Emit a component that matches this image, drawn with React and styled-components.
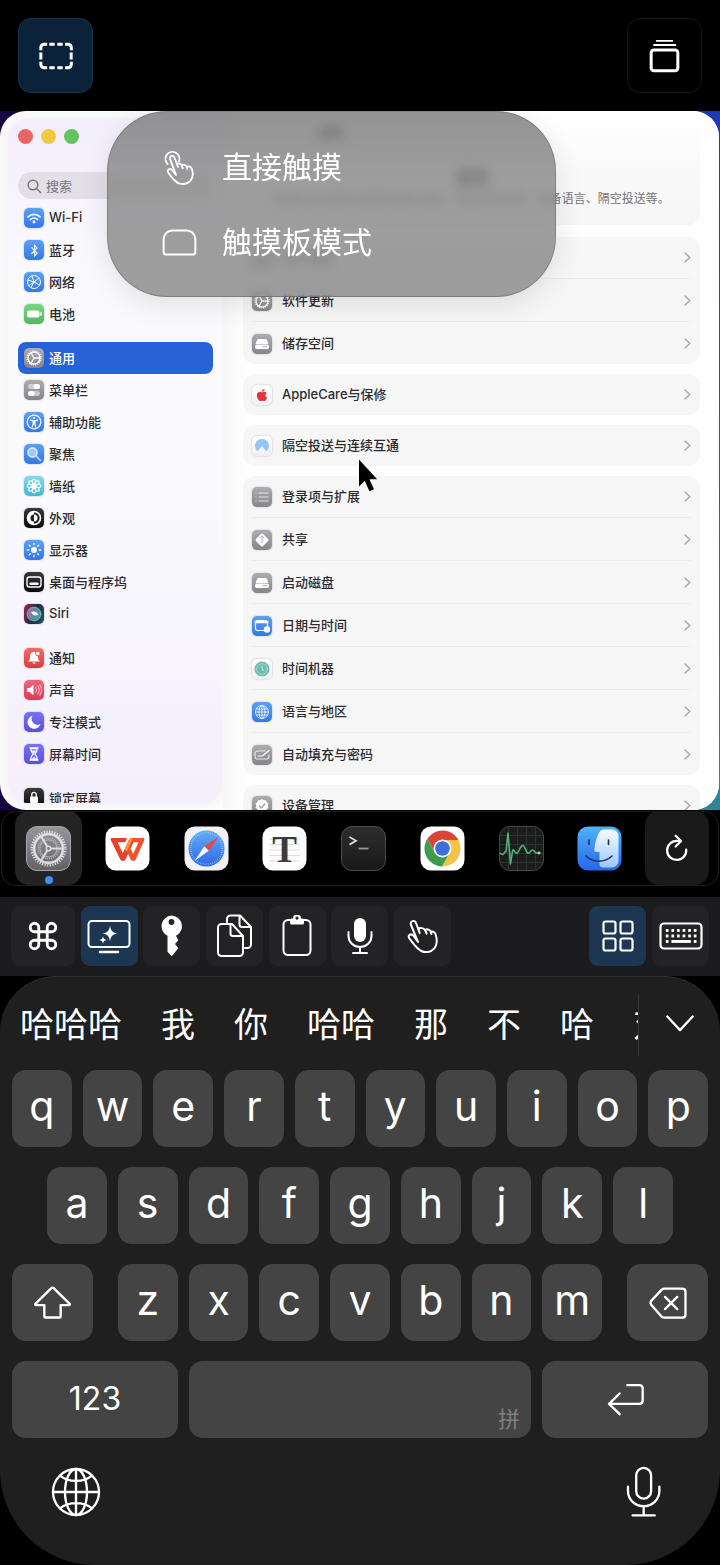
import React from "react";
import styled, { createGlobalStyle, css } from "styled-components";
import { FaApple, FaBluetoothB } from "react-icons/fa";

const Global = createGlobalStyle`
  *, *::before, *::after { box-sizing: border-box; }
  body {
    margin: 0;
    background: #000;
    font-family: Inter, "Noto Sans CJK SC", sans-serif;
  }
  button, input { font: inherit; color: inherit; border: 0; padding: 0; margin: 0; background: none; }
  h1, p, ul { margin: 0; padding: 0; }
  li { list-style: none; }
  svg { display: block; flex: none; }
`;

/* ---------- Shell ---------- */

const Screen = styled.main`
  display: flex;
  flex-direction: column;
  height: 100vh;
  min-height: 1240px;
  overflow: hidden;
  background: #000;
  color: #fff;
`;

const TopBar = styled.header`
  display: flex;
  justify-content: space-between;
  padding: 18px;
`;

const TopButton = styled.button`
  display: grid;
  place-items: center;
  width: 75px;
  height: 75px;
  border: 1px solid ${(p) => (p.$active ? "#1b3247" : "#171717")};
  border-radius: 13px;
  background: ${(p) => (p.$active ? "#0a223a" : "#000")};
`;

/* ---------- Remote desktop ---------- */

const Desktop = styled.section`
  position: relative;
  flex: 1 1 0;
  min-height: 0;
  display: flex;
  padding-right: 1px;
  background:
    linear-gradient(90deg, #16063f 50%, transparent 50%),
    linear-gradient(180deg, #1e37b6 0%, #2b55b4 50%, #2f8594 100%);
`;

const Window = styled.div`
  flex: 1;
  min-width: 0;
  display: flex;
  overflow: hidden;
  border-radius: 26px;
  background: #fefefe;
  color: #2b2b2d;
`;

const Sidebar = styled.aside`
  flex: none;
  width: 215px;
  margin: 7px 0 7px 8px;
  padding: 11px 10px 0;
  overflow: hidden;
  border-radius: 20px;
  background: linear-gradient(180deg, #f3edfc 0%, #fafafd 22%, #fafafc 55%, #f6f2fd 88%, #f5eefc 100%);
  box-shadow: 0 0 12px 4px rgba(0, 0, 0, 0.05);
`;

const Lights = styled.div`
  display: flex;
  gap: 8px;
  margin-bottom: 28px;
`;

const Light = styled.button`
  width: 15px;
  height: 15px;
  border-radius: 50%;
  background: ${(p) => p.$color};
`;

const SearchField = styled.label`
  display: flex;
  align-items: center;
  gap: 4px;
  height: 27px;
  margin-bottom: 3px;
  padding-left: 8px;
  border-radius: 14px;
  background: #e2dfe6;
  color: #77767b;
  font-size: 13px;
  input {
    flex: 1;
    min-width: 0;
    outline: 0;
  }
  input::placeholder {
    color: #77767b;
    opacity: 1;
  }
`;

const NavGroup = styled.ul`
  margin-bottom: 12px;
`;

const NavItem = styled.button`
  display: flex;
  align-items: center;
  gap: 5px;
  width: 100%;
  height: 32px;
  padding-left: 6px;
  border-radius: 8px;
  font-size: 13px;
  font-weight: 500;
  ${(p) =>
    p.$selected &&
    css`
      background: #2862d9;
      color: #fff;
    `}
`;

const Label = styled.span`
  flex: 1;
  padding-bottom: 2px;
  text-align: left;
`;

const Tile = styled.span`
  display: grid;
  place-items: center;
  flex: none;
  width: 20px;
  height: 20px;
  border-radius: 5px;
  background: ${(p) => p.$bg};
  color: ${(p) => p.$ink || "#fff"};
  box-shadow: 0 0 2px rgba(0, 0, 0, 0.28);
  overflow: hidden;
`;

const Content = styled.div`
  flex: 1;
  min-width: 0;
  padding: 9px 19px 0 20px;
  background: linear-gradient(90deg, #f7f7f8 0, #fefefe 24px);
`;

const Hero = styled.header`
  margin-bottom: 12px;
  padding-bottom: 17px;
  border-radius: 12px;
  background: linear-gradient(180deg, #fefefe 0%, #f9f9f9 50%, #f6f6f6 100%);
  text-align: center;
`;

const WindowTitle = styled.p`
  padding-left: 76px;
  margin-bottom: 18px;
  font-size: 12px;
  font-weight: 700;
  line-height: 28px;
  text-align: left;
`;

const HeroTitle = styled.h1`
  font-size: 17px;
  line-height: 24px;
`;

const HeroText = styled.p`
  font-size: 12px;
  line-height: 18px;
  color: #747474;
  white-space: nowrap;
`;

const Card = styled.ul`
  margin-bottom: 10px;
  padding: 0 9px;
  border-radius: 12px;
  background: #f6f6f6;
`;

const CardItem = styled.li`
  & + & {
    padding-top: 1px;
    border-top: 1px solid #ececec;
  }
`;

const SettingRow = styled.button`
  display: flex;
  align-items: center;
  gap: 10px;
  width: 100%;
  height: 41px;
  font-size: 13px;
  font-weight: 500;
  > svg {
    color: #a5a5a7;
  }
`;

const Menu = styled.div`
  position: absolute;
  top: 0;
  left: 107px;
  width: 449px;
  padding: 18px 0 16px;
  border: 1px solid rgba(80, 80, 84, 0.35);
  border-radius: 60px;
  background: linear-gradient(180deg, rgba(116, 116, 118, 0.78), rgba(134, 134, 134, 0.8) 35%);
  backdrop-filter: blur(6px);
  box-shadow: 0 8px 28px rgba(0, 0, 0, 0.1);
`;

const MenuItem = styled.button`
  display: grid;
  grid-template-columns: 36px 1fr;
  align-items: center;
  gap: 25px;
  width: 100%;
  height: 75px;
  padding-left: 53px;
  text-align: left;
  svg {
    justify-self: center;
  }
`;

const MenuLabel = styled.span`
  padding-bottom: 6px;
  font-size: 30px;
`;

const Pointer = styled.svg`
  position: absolute;
  top: 344px;
  left: 355px;
`;

/* ---------- Dock ---------- */

const Dock = styled.nav`
  display: flex;
  justify-content: space-between;
  height: 75px;
  margin: 1px 1px 11px;
  padding: 0 10px 0 14px;
  border-radius: 15px;
  box-shadow: inset 0 0 0 1px #1d1d1d;
`;

const DockItem = styled.button`
  position: relative;
  display: grid;
  place-items: center;
  width: ${(p) => (p.$action ? "64px" : "67px")};
  height: 74px;
  border-radius: 14px;
  background: ${(p) => (p.$active ? "#242424" : p.$action ? "#1a1a1a" : "none")};
`;

const RunningDot = styled.span`
  position: absolute;
  bottom: 1px;
  left: 50%;
  width: 8px;
  height: 8px;
  margin-left: -4px;
  border-radius: 50%;
  background: #3f8cf3;
`;

/* ---------- Tool strip ---------- */

const ToolStrip = styled.div`
  display: flex;
  justify-content: space-between;
  padding: 9px 11px 10px;
  background: #1c1c1e;
`;

const ToolGroup = styled.div`
  display: flex;
  justify-content: space-between;
  flex: 0 1 ${(p) => p.$span}px;
`;

const Tool = styled.button`
  display: grid;
  place-items: center;
  width: ${(p) => (p.$wide ? "64px" : "57px")};
  height: 60px;
  border-radius: 9px;
  background: ${(p) => (p.$active ? "#1d3753" : "#232325")};
`;

/* ---------- Keyboard ---------- */

const Keyboard = styled.section`
  padding: 18px 12px 48px;
  border-top: 1px solid #303030;
  border-radius: 56px 56px 95px 95px;
  background: #1f1f1f;
`;

const Candidates = styled.div`
  display: flex;
  height: 61px;
  margin-bottom: 14px;
`;

const CandidateList = styled.div`
  flex: 1;
  min-width: 0;
  display: flex;
  align-items: center;
  gap: 39px;
  padding: 0 0 2px 8px;
  overflow: hidden;
  border-right: 1px solid #363636;
`;

const Candidate = styled.button`
  flex: none;
  font-size: 34px;
  line-height: 48px;
  white-space: nowrap;
`;

const Expand = styled.button`
  display: grid;
  place-items: center;
  width: 69px;
  padding: 0 0 4px 12px;
`;

const KeyRows = styled.div`
  display: grid;
  gap: 20px;
`;

const KeyRow = styled.div`
  display: flex;
  gap: ${(p) => (p.$loose ? "25px" : "11px")};
  padding: 0 ${(p) => (p.$inset ? "35px" : "0")};
`;

const KeyGroup = styled.div`
  flex: 1;
  display: flex;
  gap: 11px;
`;

const Key = styled.button`
  display: grid;
  place-items: center;
  flex: ${(p) => (p.$width ? `0 0 ${p.$width}px` : "1 1 0")};
  min-width: 0;
  height: 77px;
  border-radius: 14px;
  background: #444;
`;

const LetterKey = styled(Key)`
  padding-bottom: 5px;
  font-size: 41px;
  line-height: 52px;
`;

const NumberKey = styled(Key)`
  padding-bottom: 2px;
  font-size: 32px;
`;

const SpaceKey = styled(Key)`
  place-items: end;
  padding: 0 11px 5px;
  color: #7f7f7f;
  font-size: 22px;
`;

const SystemRow = styled.div`
  display: flex;
  align-items: center;
  justify-content: space-between;
  height: 51px;
  margin-top: 28px;
  padding: 0 47px 0 39px;
`;

/* ---------- Line icons ---------- */

const Line = ({ w, h, box, sw = 2, children, ...rest }) => (
  <svg
    width={w}
    height={h}
    viewBox={box}
    fill="none"
    stroke="currentColor"
    strokeWidth={sw}
    strokeLinecap="round"
    strokeLinejoin="round"
    aria-hidden="true"
    {...rest}
  >
    {children}
  </svg>
);

const SelectionIcon = () => (
  <Line w={34} h={28} box="116 127 102 83" sw={9} strokeLinecap="butt">
    <path d="M121.500 151v-8a10 10 0 0 1 10-10h9M147 133h16M171 133h16M194 133h9a10 10 0 0 1 10 10v8M212.500 158v21M121.500 158v21M121.500 186v8a10 10 0 0 0 10 10h9M147 204h16M171 204h16M194 204h9a10 10 0 0 0 10-10v-8" />
  </Line>
);

const WindowsIcon = () => (
  <Line w={31} h={34} box="866 113 93 101" sw={9}>
    <rect x="872.500" y="145.500" width="80" height="62" rx="8" />
    <path d="M889 118h47M881 130.500h64" strokeWidth="5.500" />
  </Line>
);

const TapIcon = () => (
  <Line w={30} h={35} box="492 442 90 105" sw={5.5}>
    <path d="M503 484a21 21 0 1 1 34-8" />
    <path d="M528 517L511 471c-4-12 9-16 13-5l10 27-3-9c5-4 12-1 14 4l3 9-3-9c5-4 13-1 15 5l2 6-2-6c6-4 13-1 16 7 4 12 3 24-4 33-8 9-22 13-35 9-14-5-21-17-32-32-6-8 4-15 11-8z" />
  </Line>
);

const TrackpadIcon = () => (
  <Line w={35} h={27} box="484 688 107 82" sw={6}>
    <path d="M516 692h43a27 27 0 0 1 27 27v38a9 9 0 0 1-9 9h-79a9 9 0 0 1-9-9v-38a27 27 0 0 1 27-27z" />
  </Line>
);

const CommandIcon = () => (
  <Line w={34} h={34} box="0 0 24 24" sw={2}>
    <path d="M15 6v12a3 3 0 1 0 3-3H6a3 3 0 1 0 3 3V6a3 3 0 1 0-3 3h12a3 3 0 1 0-3-3" />
  </Line>
);

const MonitorIcon = () => (
  <Line w={44} h={36} box="0 0 44 36" sw={2}>
    <rect x="1.500" y="3" width="41" height="26" rx="3.500" />
    <path d="M13 34h18" strokeWidth="2.500" />
    <g fill="currentColor" stroke="none">
      <path d="M23 7.500c.8 5.600 2.400 7.200 8 8-5.600.8-7.200 2.400-8 8-.8-5.600-2.400-7.200-8-8 5.600-.8 7.200-2.400 8-8z" />
      <path d="M16 18c.4 2.800 1.200 3.600 4 4-2.800.4-3.600 1.200-4 4-.4-2.800-1.200-3.600-4-4 2.800-.4 3.600-1.200 4-4z" />
    </g>
  </Line>
);

const KeyIcon = () => (
  <svg width="24" height="42" viewBox="0 0 24 42" fill="currentColor" aria-hidden="true">
    <path
      fillRule="evenodd"
      d="M11.500.5a10.700 10.700 0 0 1 4.500 20.300l2.300 4.500-3.300 3.700 3.300 4.300-6.600 8-4.200-4.600V20.800A10.700 10.700 0 0 1 11.500.5zm0 3.600a2.900 2.900 0 1 0 0 5.800 2.900 2.900 0 0 0 0-5.800z"
    />
  </svg>
);

const CopyIcon = () => (
  <Line w={37} h={44} box="0 0 37 44" sw={2}>
    <path d="M11 8V5a3.500 3.500 0 0 1 3.500-3.500H24L35 13v17.500a3.500 3.500 0 0 1-3.500 3.500H29" />
    <path d="M23.500 2v8.500A2.500 2.500 0 0 0 26 13h8.500" />
    <path d="M5.500 10H16l11 12v16.500a3.500 3.500 0 0 1-3.500 3.500h-18A3.500 3.500 0 0 1 2 38.500v-25A3.500 3.500 0 0 1 5.500 10z" />
    <path d="M14.500 10.500v9A2.500 2.500 0 0 0 17 22h9.500" />
  </Line>
);

const ClipboardIcon = () => (
  <Line w={30} h={42} box="0 0 30 42" sw={2}>
    <path d="M8 5H6a4.500 4.500 0 0 0-4.500 4.500v26A4.500 4.500 0 0 0 6 40h18a4.500 4.500 0 0 0 4.500-4.500v-26A4.500 4.500 0 0 0 24 5h-2" />
    <path
      fill="currentColor"
      stroke="none"
      fillRule="evenodd"
      d="M11 3.500a4 4 0 0 1 8 0h1.500A1.500 1.500 0 0 1 22 5v3a1.500 1.500 0 0 1-1.500 1.500h-11A1.500 1.500 0 0 1 8 8V5a1.500 1.500 0 0 1 1.500-1.500zm4-2a1.600 1.600 0 1 0 0 3.200 1.600 1.600 0 0 0 0-3.200z"
    />
  </Line>
);

const MicFilledIcon = () => (
  <Line w={26} h={38} box="0 0 26 38" sw={2}>
    <rect x="7" y="1" width="12" height="24" rx="6" fill="currentColor" stroke="none" />
    <path d="M1.500 15v4a11.500 11 0 0 0 23 0v-4M13 30v6M6 36h14" />
  </Line>
);

const HandIcon = () => (
  <Line w={31} h={35} box="140 358 93 105" sw={6}>
    <path d="M173 427L152 376c-4-12 11-17 15-6l11 30-4-12c5-5 17-3 20 3l5 11-4-11c6-4 14-1 16 5l2 7-2-7c8-1 14 3 16 12 4 14 3 28-5 38-10 12-27 14-39 8-17-9-25-24-36-38-7-9 5-16 12-8z" />
  </Line>
);

const GridIcon = () => (
  <Line w={32} h={32} box="0 0 32 32" sw={2.2}>
    {[1.5, 18.5].map((y) =>
      [1.5, 18.5].map((x) => <rect key={`${x}-${y}`} x={x} y={y} width="12" height="12" rx="2" />)
    )}
  </Line>
);

const KeyboardIcon = () => (
  <Line w={44} h={28} box="0 0 44 28" sw={2.2}>
    <rect x="1.500" y="1.500" width="41" height="25" rx="3.500" />
    <g fill="currentColor" stroke="none">
      {[7, 12.5, 18].map((y) =>
        [6.8, 12.4, 18, 23.6, 29.2, 34.8].map((x, i) =>
          y > 17 && i > 0 && i < 5 ? null : <rect key={`${x}-${y}`} x={x} y={y} width="2.700" height="2.900" />
        )
      )}
      <rect x="12.400" y="18" width="19.500" height="2.900" />
    </g>
  </Line>
);

const RefreshIcon = () => (
  <Line w={24} h={28} box="916 104 70 82" sw={6.5}>
    <path d="M978 150A28 28 0 1 1 950 124H962" />
    <path d="M947 109l16 15.500-16 16" />
  </Line>
);

const ChevronDownIcon = () => (
  <Line w={28} h={17} box="916 134 85 50" sw={7}>
    <path d="M920 138l38.500 41 38.500-41" />
  </Line>
);

const ShiftIcon = () => (
  <Line w={37} h={33} box="101 111 111 98" sw={7}>
    <path d="M153 117q3.500-3 7 0l48 47q2 4-3 4h-24v33q0 4-4 4h-41q-4 0-4-4v-33h-24q-5 0-3-4z" />
  </Line>
);

const DeleteIcon = () => (
  <Line w={38} h={32} box="866 112 114 97" sw={7}>
    <path d="M912 117h54q10 0 10 10v68q0 10-10 10h-54q-5 0-8-3l-32-36q-4-6 0-12l32-34q3-3 8-3zM914 142l37 37M951 142l-37 37" />
  </Line>
);

const ReturnIcon = () => (
  <Line w={37} h={33} box="740 402 111 98" sw={7}>
    <path d="M801 408h36q10 0 10 10v36q0 10-10 10h-90M778 433l-32 31 32 31" />
  </Line>
);

const GlobeIcon = () => (
  <Line w={50} h={50} box="153 654 150 150" sw={7}>
    <circle cx="228" cy="729" r="69" />
    <ellipse cx="228" cy="729" rx="33" ry="69" />
    <path d="M159 729h138M228 660v138M180 680c26 21 70 21 96 0M180 778c26-21 70-21 96 0" />
  </Line>
);

const MicIcon = () => (
  <Line w={35} h={52} box="797 646 106 156" sw={7}>
    <rect x="828" y="651" width="45" height="93" rx="22.500" />
    <path d="M803 708v14a47.500 45 0 0 0 95 0v-14M850.500 767v27M817 795h67" />
  </Line>
);

const SearchIcon = () => (
  <Line w={16} h={16} box="0 0 16 16" sw={1.5}>
    <circle cx="7" cy="7" r="4.800" />
    <path d="M10.500 10.500l4 4" />
  </Line>
);

const ChevronRightIcon = () => (
  <Line w={7} h={11} box="0 0 7 11" sw={1.4}>
    <path d="M1 1l4.800 4.500L1 10" />
  </Line>
);

/* ---------- Settings tile glyphs (20 × 20) ---------- */

const Glyph = ({ children, sw = 1.4 }) => (
  <Line w={20} h={20} box="0 0 20 20" sw={sw}>
    {children}
  </Line>
);

const solid = { fill: "currentColor", stroke: "none" };

const glyphs = {
  wifi: (
    <Glyph sw={1.7}>
      <path d="M4 8.800c3.500-3.300 8.500-3.300 12 0M6.500 11.500c2-2 5-2 7 0" />
      <circle cx="10" cy="14" r="1.400" {...solid} />
    </Glyph>
  ),
  bluetooth: <FaBluetoothB size={13} />,
  network: (
    <Glyph sw={1}>
      <circle cx="10" cy="10" r="6.500" />
      <path d="M4 8l6 2 5-4M10 10l-3 5.500M10 10l5.500 3M8 4l2 6M5 13.500L10 10" />
      <circle cx="10" cy="10" r="1.300" {...solid} />
    </Glyph>
  ),
  battery: (
    <Glyph>
      <rect x="3" y="6.500" width="12.500" height="7" rx="2" {...solid} />
      <path d="M17 8.800v2.400" />
    </Glyph>
  ),
  gear: (
    <Glyph sw={1.3}>
      <circle cx="10" cy="10" r="6" />
      <circle cx="10" cy="10" r="7" strokeWidth="1.200" strokeDasharray="1.100 1.100" strokeLinecap="butt" />
      <path d="M10 10h6M10 10L7 4.800M10 10l-3 5.200" />
    </Glyph>
  ),
  toggles: (
    <Glyph>
      <rect x="4" y="4" width="12" height="5" rx="2.500" fill="currentColor" fillOpacity=".5" stroke="none" />
      <rect x="4" y="11" width="12" height="5" rx="2.500" fill="currentColor" fillOpacity=".5" stroke="none" />
      <rect x="9.500" y="4" width="6.500" height="5" rx="2.500" {...solid} />
      <rect x="4" y="11" width="6.500" height="5" rx="2.500" {...solid} />
    </Glyph>
  ),
  access: (
    <Glyph sw={1.2}>
      <circle cx="10" cy="10" r="6.800" />
      <circle cx="10" cy="6" r="1.100" {...solid} />
      <path d="M6.500 8.200l2.700.7v2.500L8.300 15M13.500 8.200l-2.700.7v2.500l.9 3.600M10 9v3" />
    </Glyph>
  ),
  search: (
    <Glyph sw={1.6}>
      <circle cx="8.500" cy="8.500" r="4.600" fill="currentColor" fillOpacity=".5" strokeOpacity=".7" />
      <path d="M12.500 12.500l4 4" strokeOpacity=".7" />
    </Glyph>
  ),
  flower: (
    <Glyph sw={1.1}>
      {[0, 45, 90, 135, 180, 225, 270, 315].map((a) => (
        <ellipse key={a} cx="10" cy="5.600" rx="1.700" ry="2.300" transform={`rotate(${a} 10 10)`} />
      ))}
      <circle cx="10" cy="10" r="2" {...solid} />
    </Glyph>
  ),
  appearance: (
    <Glyph sw={1.6}>
      <circle cx="10" cy="10" r="6.500" />
      <path d="M10 3.500a6.500 6.500 0 0 0 0 13v-3a3.500 3.500 0 0 1 0-7z" {...solid} />
      <path d="M10 6.500a3.500 3.500 0 0 1 0 7z" {...solid} />
    </Glyph>
  ),
  sun: (
    <Glyph sw={1.3}>
      <circle cx="10" cy="10" r="3" {...solid} />
      <path d="M10 3.300v1.400M10 15.300v1.400M3.300 10h1.400M15.300 10h1.400M5.300 5.300l1 1M13.700 13.700l1 1M14.700 5.300l-1 1M6.300 13.700l-1 1" />
    </Glyph>
  ),
  dock: (
    <Glyph sw={1.4}>
      <rect x="3" y="5" width="14" height="10" rx="2.500" />
      <rect x="5.500" y="10.500" width="9" height="2.500" rx=".8" {...solid} />
    </Glyph>
  ),
  siri: (
    <Glyph sw={1}>
      <circle cx="10" cy="10" r="7" fill="#5fb5c4" fillOpacity=".75" stroke="#b9dfe6" strokeOpacity=".5" />
      <path d="M3.500 9c2-5 7-5 8 .5-1 4-6 3.500-8-.5z" fill="#c0609e" fillOpacity=".75" stroke="none" />
      <path d="M7 8c3-1.500 6 0 7.500 2.500-2.500 1.800-5.500 1.500-7.500-2.500z" {...solid} />
    </Glyph>
  ),
  bell: (
    <Glyph>
      <path d="M10 4c-2.600 0-4 1.900-4 4.400 0 3-.8 3.800-2 5.100h12c-1.200-1.300-2-2.100-2-5.100C14 5.900 12.600 4 10 4zM8.300 14.500a1.800 1.800 0 0 0 3.400 0z" {...solid} />
      <circle cx="14" cy="5.500" r="2.400" fill="currentColor" stroke="#e0504c" strokeWidth="1" />
    </Glyph>
  ),
  speaker: (
    <Glyph sw={1.1}>
      <path d="M3 8h2.500L9.500 4.800v10.400L5.500 12H3z" {...solid} />
      <path d="M11.800 7.500c1 1.500 1 3.500 0 5M13.800 6c1.800 2.400 1.800 5.600 0 8M15.800 4.800c2.400 3 2.400 7.400 0 10.400" strokeOpacity=".65" />
    </Glyph>
  ),
  moon: (
    <Glyph>
      <path d="M8.500 3.800a6.600 6.600 0 1 0 8 8.300A6 6 0 0 1 8.500 3.800z" {...solid} />
    </Glyph>
  ),
  hourglass: (
    <Glyph sw={1.3}>
      <path d="M6 4h8M6 16h8" />
      <path d="M7 4.500h6V6c0 2-1.800 3-2.200 4 .4 1 2.200 2 2.200 4v1.500H7V14c0-2 1.800-3 2.200-4C8.800 9 7 8 7 6z" />
      <path d="M7.500 6.500h5L10 9.500zM8 14.800l2-2.300 2 2.300z" {...solid} />
    </Glyph>
  ),
  lock: (
    <Glyph sw={1.3}>
      <rect x="6" y="8.500" width="8" height="6.500" rx="1.200" {...solid} />
      <path d="M7.800 8.500V6.500a2.200 2.200 0 0 1 4.400 0v2" />
    </Glyph>
  ),
  drive: (
    <Glyph>
      <path d="M6.500 5h7q1 0 1.500 1.200L16.500 10h-13L5 6.200Q5.500 5 6.500 5z" {...solid} />
      <rect x="3" y="10.500" width="14" height="4.500" rx="1.800" {...solid} />
      <path d="M11 12.700h3.500" stroke="#a8a8ac" strokeWidth="1" />
    </Glyph>
  ),
  apple: <FaApple size={14} />,
  airdrop: (
    <Glyph>
      <path d="M10 3a7 7 0 0 1 4.500 12.300L10 10l-4.500 5.300A7 7 0 0 1 10 3z" {...solid} />
      <path d="M7.800 16.200L10 11l2.200 5.200z" fill="#eef6ff" stroke="none" />
    </Glyph>
  ),
  list: (
    <Glyph sw={1.2}>
      <path d="M7 6h9M7 10h9M7 14h9M4 6h.1M4 10h.1M4 14h.1" strokeOpacity=".75" />
    </Glyph>
  ),
  share: (
    <Glyph>
      <rect x="5" y="5" width="10" height="10" rx="1.500" transform="rotate(45 10 10)" {...solid} />
      <path d="M10 6v7M8 8l2-2 2 2" stroke="#b4b4b8" strokeWidth="1" />
    </Glyph>
  ),
  calendar: (
    <Glyph sw={1.2}>
      <rect x="3.500" y="4.500" width="12" height="10" rx="2" />
      <path d="M3.500 6.200h12" strokeWidth="2.200" />
      <circle cx="15" cy="13.500" r="3.200" {...solid} />
    </Glyph>
  ),
  timemachine: (
    <Glyph sw={1}>
      <circle cx="10" cy="10" r="7.500" {...solid} />
      <circle cx="10" cy="10" r="5.300" stroke="#a4d8ce" />
      <path d="M10 7v3.500l2 1" stroke="#c6eae3" />
    </Glyph>
  ),
  globe: (
    <Glyph sw={0.9}>
      <g strokeOpacity=".85">
        <circle cx="10" cy="10" r="6.500" />
        <ellipse cx="10" cy="10" rx="3" ry="6.500" />
        <path d="M3.500 10h13M10 3.500v13M4.500 7h11M4.500 13h11" />
      </g>
    </Glyph>
  ),
  password: (
    <Glyph sw={1.2}>
      <path d="M13 6H5.500A2.500 2.500 0 0 0 3 8.500v3A2.500 2.500 0 0 0 5.500 14h9a2.500 2.500 0 0 0 2.500-2.500V10" strokeOpacity=".75" />
      <path d="M6 11h4M11 10.500l6-5" />
    </Glyph>
  ),
  badge: (
    <Glyph>
      <path d="M10 3l1.800 1.300 2.200-.1.700 2.100 1.800 1.300-.7 2.100.7 2.100-1.800 1.300-.7 2.100-2.200-.1L10 16.500l-1.800-1.400-2.200.1-.7-2.100-1.800-1.300.7-2.100-.7-2.100 1.800-1.300.7-2.100 2.200.1z" {...solid} />
      <path d="M7.500 10l1.800 2 3.400-4" stroke="#a4a4a8" />
    </Glyph>
  ),
};

const BLUE = "linear-gradient(#5ba0f5, #3578e6)";
const GREY = "linear-gradient(#acacb1, #85858a)";
const BLACK = "linear-gradient(#3a3a3a, #0a0a0a)";
const PURPLE = "linear-gradient(#7b73f2, #584fdd)";
const WHITE = "linear-gradient(#fff, #f0f0f2)";

const navGroups = [
  [
    ["Wi-Fi", "wifi", BLUE],
    ["蓝牙", "bluetooth", BLUE],
    ["网络", "network", BLUE],
    ["电池", "battery", "linear-gradient(#7cd582, #52b85c)"],
  ],
  [
    ["通用", "gear", GREY],
    ["菜单栏", "toggles", GREY],
    ["辅助功能", "access", BLUE],
    ["聚焦", "search", BLUE],
    ["墙纸", "flower", "linear-gradient(#86d9ea, #43b6d3)"],
    ["外观", "appearance", BLACK],
    ["显示器", "sun", BLUE],
    ["桌面与程序坞", "dock", BLACK],
    ["Siri", "siri", "linear-gradient(110deg, #a1265f, #23283d 50%, #1b5a6e)"],
  ],
  [
    ["通知", "bell", "linear-gradient(#ee6d66, #d93d3d)"],
    ["声音", "speaker", "linear-gradient(#f0647c, #dc3a5a)"],
    ["专注模式", "moon", PURPLE],
    ["屏幕时间", "hourglass", PURPLE],
  ],
  [["锁定屏幕", "lock", BLACK]],
];

const cards = [
  [
    ["关于本机", "dock", GREY],
    ["软件更新", "gear", GREY],
    ["储存空间", "drive", GREY],
  ],
  [["AppleCare与保修", "apple", WHITE, "#e0353f"]],
  [["隔空投送与连续互通", "airdrop", WHITE, "#94c4f5"]],
  [
    ["登录项与扩展", "list", GREY],
    ["共享", "share", GREY],
    ["启动磁盘", "drive", GREY],
    ["日期与时间", "calendar", BLUE],
    ["时间机器", "timemachine", WHITE, "#6fbcae"],
    ["语言与地区", "globe", BLUE],
    ["自动填充与密码", "password", GREY],
  ],
  [["设备管理", "badge", GREY]],
];

/* ---------- Dock app icons (45 × 45) ---------- */

const AppIcon = ({ children, fill, stroke, id, from, to }) => (
  <svg width="45" height="45" viewBox="0 0 45 45" aria-hidden="true">
    {from && (
      <defs>
        <linearGradient id={id} x1="0" y1="0" x2="0" y2="1">
          <stop offset="0" stopColor={from} />
          <stop offset="1" stopColor={to} />
        </linearGradient>
      </defs>
    )}
    <rect x=".5" y=".5" width="44" height="44" rx="10.500" fill={from ? `url(#${id})` : fill} stroke={stroke || "none"} />
    {children}
  </svg>
);

const SettingsApp = () => (
  <AppIcon id="settings" from="#97979b" to="#626266" stroke="#a5a5a9">
    <g fill="none" stroke="#dcdcde">
      <circle cx="22.500" cy="22.500" r="16.800" strokeWidth="2.400" strokeDasharray="1.300 1.340" />
      <circle cx="22.500" cy="22.500" r="14.400" strokeWidth="2.600" />
      <circle cx="22.500" cy="22.500" r="10" strokeWidth="2" strokeDasharray="1 1" stroke="#b4b4b7" />
      <circle cx="22.500" cy="22.500" r="8.500" strokeWidth="1" stroke="#b4b4b7" />
      <circle cx="22.500" cy="22.500" r="2.200" strokeWidth="1.600" fill="#77777b" />
      <path d="M24.500 22.500H36M21.400 20.700L15.500 11M21.400 24.300L15.500 34" strokeWidth="2" />
    </g>
  </AppIcon>
);

const WriterApp = () => (
  <AppIcon fill="#fff">
    <path d="M6.800 12H22l-1.800 4.300H12.600l5.200 11 6-13.300c.6-1.300 1.500-2 3-2h3.600L20.200 34q-2.400 2.200-4.600 0L6 14.500Q5 12 6.800 12z" fill="#e8402d" />
    <path d="M27 12h11q2 0 1.200 2.400L30.500 34q-2.300 2.200-4.600 0l-4-8.500 2.500-5.300 3.800 7.800 5.300-11.700h-5.800z" fill="#ee5330" />
    <path d="M21.900 25.500L28 12.200h-1.200q-2.200 0-3 1.800l-4.200 9.300z" fill="#f4963c" />
  </AppIcon>
);

const BrowserApp = () => (
  <AppIcon fill="#f1f1f2">
    <defs>
      <linearGradient id="compass" x1="0" y1="0" x2="0" y2="1">
        <stop offset="0" stopColor="#60aef8" />
        <stop offset="1" stopColor="#2f68e2" />
      </linearGradient>
    </defs>
    <circle cx="22.500" cy="22.500" r="18" fill="url(#compass)" />
    <circle cx="22.500" cy="22.500" r="15.800" fill="none" stroke="#a9cffa" strokeWidth="1.600" strokeDasharray=".6 1.400" />
    <path d="M35 10.500L20.300 20.300l4.400 4.400z" fill="#e6484a" />
    <path d="M10.500 35l9.800-14.700 4.400 4.400z" fill="#f6f6f8" />
  </AppIcon>
);

const TyporaApp = () => (
  <AppIcon fill="#fdfdfd">
    <path d="M7 13h31M7 18.500h31M7 24h31M7 29.500h31M7 35h31" stroke="#dedede" strokeWidth="1" />
    <text x="22.500" y="35.500" textAnchor="middle" fontFamily="'Liberation Serif', serif" fontWeight="700" fontSize="37" fill="#3b3b3b">
      T
    </text>
  </AppIcon>
);

const TerminalApp = () => (
  <AppIcon id="terminal" from="#2e2e2e" to="#181818" stroke="#4b4b4b">
    <path d="M8.500 11l6.500 3.800-6.500 3.800" fill="none" stroke="#d8d8d8" strokeWidth="1.800" />
    <path d="M17.500 22.500h10" stroke="#9a9a9a" strokeWidth="1.800" />
  </AppIcon>
);

const ChromeApp = () => (
  <AppIcon fill="#fff">
    <path d="M7.210 13.010A18 18 0 0 1 38.370 14H22.500L15.140 26.750z" fill="#dc4437" />
    <path d="M38.370 14A18 18 0 0 1 21.930 40.490L29.860 26.750 22.500 14z" fill="#f6c344" />
    <path d="M21.930 40.490A18 18 0 0 1 7.210 13.010L15.140 26.750H29.860z" fill="#3b9c50" />
    <circle cx="22.500" cy="22.500" r="9" fill="#fff" />
    <circle cx="22.500" cy="22.500" r="7.300" fill="#3c6fdc" />
  </AppIcon>
);

const ActivityApp = () => (
  <AppIcon fill="#1b1d1c" stroke="#464847">
    <path d="M9.500 1v43M18.500 1v43M27.500 1v43M36.500 1v43M1 9.500h43M1 18.500h43M1 27.500h43M1 36.500h43" stroke="#2d312f" strokeWidth="1" />
    <path
      d="M1 27c2 2 3.500 2 4.500-.5s1.300 1.500 1.800-3L9 7l2.500 31 2-13c.5-2 1.500-1 2.500 1s2.500 1.500 4-1.500c1.500-3.500 2.500-5 4-5s2.500 5 4.500 7.500c2 1.500 3-3 5-3s2 3 4 3h4"
      fill="none"
      stroke="#55b27c"
      strokeWidth="1.600"
      strokeLinejoin="round"
    />
    <circle cx="40" cy="27" r="1.400" fill="#bfc6c2" />
  </AppIcon>
);

const FinderApp = () => (
  <AppIcon id="finder" from="#4db4f8" to="#2866ea">
    <defs>
      <linearGradient id="face" x1="0" y1="0" x2="0" y2="1">
        <stop offset="0" stopColor="#f6fbff" />
        <stop offset="1" stopColor="#9cc8fb" />
      </linearGradient>
    </defs>
    <path d="M26 3.500h9a6.500 6.500 0 0 1 6.500 6.500v25a6.500 6.500 0 0 1-6.500 6.500h-9q-3.500 0-3.500-3.500V26H19q-2 0-1.700-2Q18.500 12 22.500 6q1.500-2.500 3.500-2.500z" fill="url(#face)" />
    <path d="M12 14v4.500M31.500 14v4.500M9 30c7.500 7 18.500 7 26 0" fill="none" stroke="#1c3252" strokeWidth="1.600" strokeLinecap="round" />
  </AppIcon>
);

const apps = [
  ["系统设置", SettingsApp, true],
  ["WPS", WriterApp],
  ["Safari", BrowserApp],
  ["Typora", TyporaApp],
  ["终端", TerminalApp],
  ["Chrome", ChromeApp],
  ["活动监视器", ActivityApp],
  ["访达", FinderApp],
];

const leftTools = [
  ["Command", CommandIcon, { $wide: true }],
  ["屏幕", MonitorIcon, { $active: true }],
  ["密码", KeyIcon],
  ["拷贝", CopyIcon],
  ["粘贴", ClipboardIcon],
  ["听写", MicFilledIcon],
  ["触摸", HandIcon],
];

const rightTools = [
  ["程序坞", GridIcon, { $active: true }],
  ["键盘", KeyboardIcon],
];

const candidates = ["哈哈哈", "我", "你", "哈哈", "那", "不", "哈", "对"];

const Letters = ({ keys }) => keys.split("").map((k) => <LetterKey key={k}>{k}</LetterKey>);

const Tools = ({ items, span }) => (
  <ToolGroup $span={span}>
    {items.map(([label, Icon, look]) => (
      <Tool key={label} aria-label={label} {...look}>
        <Icon />
      </Tool>
    ))}
  </ToolGroup>
);

export default function App() {
  return (
    <>
      <Global />
      <Screen>
        <TopBar>
          <TopButton $active aria-label="选区">
            <SelectionIcon />
          </TopButton>
          <TopButton aria-label="窗口">
            <WindowsIcon />
          </TopButton>
        </TopBar>

        <Desktop>
          <Window>
            <Sidebar>
              <Lights>
                <Light $color="#ec6462" aria-label="关闭" />
                <Light $color="#f4c843" aria-label="最小化" />
                <Light $color="#61c45f" aria-label="缩放" />
              </Lights>
              <SearchField>
                <SearchIcon />
                <input type="text" placeholder="搜索" aria-label="搜索" />
              </SearchField>
              <nav>
                {navGroups.map((group) => (
                  <NavGroup key={group[0][0]}>
                    {group.map(([label, icon, bg]) => (
                      <li key={label}>
                        <NavItem $selected={label === "通用"}>
                          <Tile $bg={bg}>{glyphs[icon]}</Tile>
                          <Label>{label}</Label>
                        </NavItem>
                      </li>
                    ))}
                  </NavGroup>
                ))}
              </nav>
            </Sidebar>

            <Content>
              <Hero>
                <WindowTitle>通用</WindowTitle>
                <HeroTitle>通用</HeroTitle>
                <HeroText>管理Mac的整体设置和偏好设置，例如软件更新、设备语言、隔空投送等。</HeroText>
              </Hero>
              {cards.map((rows) => (
                <Card key={rows[0][0]}>
                  {rows.map(([label, icon, bg, ink]) => (
                    <CardItem key={label}>
                      <SettingRow>
                        <Tile $bg={bg} $ink={ink}>
                          {glyphs[icon]}
                        </Tile>
                        <Label>{label}</Label>
                        <ChevronRightIcon />
                      </SettingRow>
                    </CardItem>
                  ))}
                </Card>
              ))}
            </Content>
          </Window>

          <Menu>
            <MenuItem>
              <TapIcon />
              <MenuLabel>直接触摸</MenuLabel>
            </MenuItem>
            <MenuItem>
              <TrackpadIcon />
              <MenuLabel>触摸板模式</MenuLabel>
            </MenuItem>
          </Menu>

          <Pointer width="26" height="40" viewBox="0 0 26 40" aria-hidden="true">
            <path
              d="M4 4.500v27l5.800-5.500 4.600 10.300 4.600-2-4.600-10h7.800z"
              fill="#000"
              stroke="#fff"
              strokeWidth="2"
              strokeLinejoin="round"
              paintOrder="stroke"
            />
          </Pointer>
        </Desktop>

        <Dock>
          {apps.map(([label, Icon, active]) => (
            <DockItem key={label} $active={active} aria-label={label}>
              <Icon />
              {active && <RunningDot />}
            </DockItem>
          ))}
          <DockItem $action aria-label="刷新">
            <RefreshIcon />
          </DockItem>
        </Dock>

        <ToolStrip>
          <Tools items={leftTools} span={440} />
          <Tools items={rightTools} span={120} />
        </ToolStrip>

        <Keyboard>
          <Candidates>
            <CandidateList>
              {candidates.map((word) => (
                <Candidate key={word}>{word}</Candidate>
              ))}
            </CandidateList>
            <Expand aria-label="展开候选词">
              <ChevronDownIcon />
            </Expand>
          </Candidates>
          <KeyRows>
            <KeyRow>
              <Letters keys="qwertyuiop" />
            </KeyRow>
            <KeyRow $inset>
              <Letters keys="asdfghjkl" />
            </KeyRow>
            <KeyRow $loose>
              <Key $width={81} aria-label="Shift">
                <ShiftIcon />
              </Key>
              <KeyGroup>
                <Letters keys="zxcvbnm" />
              </KeyGroup>
              <Key $width={81} aria-label="删除">
                <DeleteIcon />
              </Key>
            </KeyRow>
            <KeyRow>
              <NumberKey $width={166}>123</NumberKey>
              <SpaceKey>拼</SpaceKey>
              <Key $width={166} aria-label="换行">
                <ReturnIcon />
              </Key>
            </KeyRow>
          </KeyRows>
          <SystemRow>
            <button aria-label="切换键盘">
              <GlobeIcon />
            </button>
            <button aria-label="听写输入">
              <MicIcon />
            </button>
          </SystemRow>
        </Keyboard>
      </Screen>
    </>
  );
}
